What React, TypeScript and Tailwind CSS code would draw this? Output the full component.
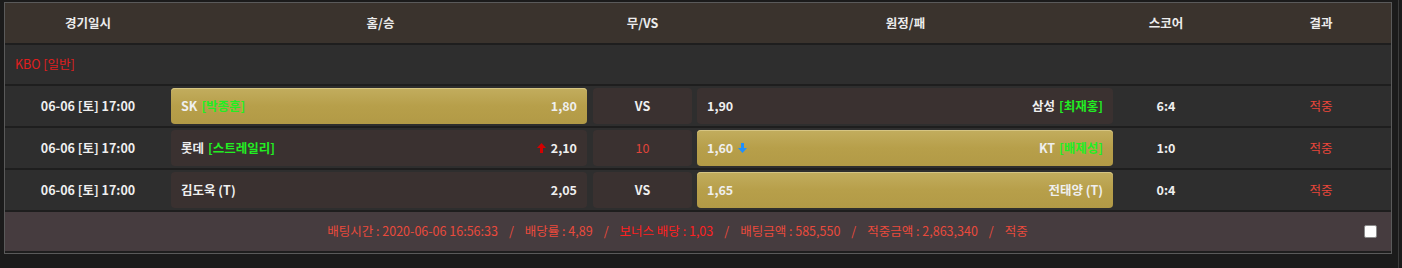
const rows = [
  {
    date: "06-06 [토] 17:00",
    home: "SK",
    homeP: "[박종훈]",
    homeOdd: "1,80",
    homeUp: false,
    draw: "VS",
    away: "삼성",
    awayP: "[최재홍]",
    awayOdd: "1,90",
    awayDown: false,
    pick: "home",
    score: "6:4",
  },
  {
    date: "06-06 [토] 17:00",
    home: "롯데",
    homeP: "[스트레일리]",
    homeOdd: "2,10",
    homeUp: true,
    draw: "10",
    away: "KT",
    awayP: "[배제성]",
    awayOdd: "1,60",
    awayDown: true,
    pick: "away",
    score: "1:0",
  },
  {
    date: "06-06 [토] 17:00",
    home: "김도욱 (T)",
    homeP: "",
    homeOdd: "2,05",
    homeUp: false,
    draw: "VS",
    away: "전태양 (T)",
    awayP: "",
    awayOdd: "1,65",
    awayDown: false,
    pick: "away",
    score: "0:4",
  },
];

const gold =
  "bg-gradient-to-b from-[#c2ad5e] via-[#b79f4a] to-[#b29a46] shadow-[inset_0_1px_0_#d6c583]";
const dark = "bg-[#3a3130]";

function UpArrow() {
  return (
    <svg width="9" height="10" viewBox="0 0 9 10" className="mr-[5px]">
      <path d="M4.5 0 L9 5 L6 5 L6 10 L3 10 L3 5 L0 5 Z" fill="#d40000" />
    </svg>
  );
}

function DownArrow() {
  return (
    <svg width="9" height="10" viewBox="0 0 9 10" className="ml-[5px]">
      <path d="M3 0 L6 0 L6 5 L9 5 L4.5 10 L0 5 L3 5 Z" fill="#1e90ff" />
    </svg>
  );
}

function Sep() {
  return <span className="mx-[11px]">/</span>;
}

export default function App() {
  return (
    <div
      className="flex h-[268px] w-[1402px] bg-[#1b1b1b] text-[12.5px]"
      style={{ fontFamily: '"Noto Sans CJK KR", "Noto Sans", sans-serif' }}
    >
      <div className="ml-[4px] mt-[2px] flex h-[252px] w-[1388px] flex-col gap-[2px] border border-[#5a5a5a] bg-[#1e1e1e]">
        {/* header */}
        <div className="flex h-[40px] items-center bg-[#3a332d] font-bold text-[#ececec]">
          <div className="w-[166px] text-center">경기일시</div>
          <div className="w-[419px] text-center">홈/승</div>
          <div className="w-[105px] text-center">무/VS</div>
          <div className="w-[421px] text-center">원정/패</div>
          <div className="w-[100px] text-center">스코어</div>
          <div className="ml-auto w-[140px] text-center">결과</div>
        </div>

        {/* league */}
        <div className="flex h-[39px] items-center bg-[#2e2e2e] pl-[10px] text-[#e01e1e]">
          KBO [일반]
        </div>

        {rows.map((r, i) => (
          <div key={i} className="flex h-[40px] items-center bg-[#2e2e2e] text-[#efefef]">
            <div className="w-[166px] text-center font-bold">{r.date}</div>
            <div className="w-[419px] pr-[3px]">
              <div
                className={`flex h-[36px] items-center justify-between rounded-[4px] px-[10px] ${
                  r.pick === "home" ? gold : dark
                }`}
              >
                <span className="font-bold">
                  {r.home}
                  {r.homeP && <span className="ml-[4px] text-[#22ee22]">{r.homeP}</span>}
                </span>
                <span className="flex items-center font-bold">
                  {r.homeUp && <UpArrow />}
                  {r.homeOdd}
                </span>
              </div>
            </div>
            <div className="w-[105px] px-[3px]">
              <div
                className={`flex h-[36px] items-center justify-center rounded-[4px] ${dark} ${
                  r.draw === "VS" ? "font-bold" : "text-[#e0443a]"
                }`}
              >
                {r.draw}
              </div>
            </div>
            <div className="w-[421px] pl-[2px] pr-[3px]">
              <div
                className={`flex h-[36px] items-center justify-between rounded-[4px] px-[10px] ${
                  r.pick === "away" ? gold : dark
                }`}
              >
                <span className="flex items-center font-bold">
                  {r.awayOdd}
                  {r.awayDown && <DownArrow />}
                </span>
                <span className="font-bold">
                  {r.away}
                  {r.awayP && <span className="ml-[4px] text-[#22ee22]">{r.awayP}</span>}
                </span>
              </div>
            </div>
            <div className="w-[100px] text-center font-bold">{r.score}</div>
            <div className="ml-auto w-[140px] text-center text-[#e8463a]">적중</div>
          </div>
        ))}

        {/* footer */}
        <div className="flex h-[39px] items-center bg-[#463c3f] text-[#ea4a3c]">
          <div className="flex-1 text-center">
            배팅시간 : 2020-06-06 16:56:33
            <Sep />
            배당률 : 4,89
            <Sep />
            <span className="text-[#ff2020]">보너스 배당 : 1,03</span>
            <Sep />
            배팅금액 : 585,550
            <Sep />
            적중금액 : 2,863,340
            <Sep />
            적중
          </div>
          <div className="flex w-[41px] justify-center">
            <div className="h-[13px] w-[13px] rounded-[2px] border border-[#8a8a8a] bg-white" />
          </div>
        </div>
      </div>
      <div className="ml-[6px] h-full w-[1px] bg-[#3c3c3c]" />
    </div>
  );
}
